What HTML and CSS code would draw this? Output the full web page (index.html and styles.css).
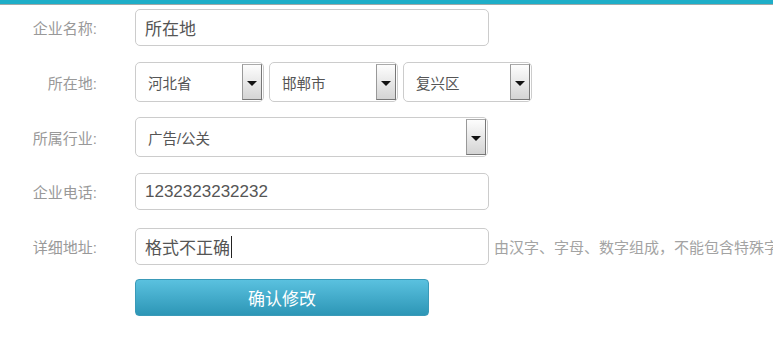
FILE: index.html
```html
<!DOCTYPE html>
<html lang="zh-CN">
<head>
    <meta charset="UTF-8">
    <meta name="viewport" content="width=device-width, initial-scale=1.0">
    <title>企业信息</title>
    <link rel="stylesheet" href="styles.css">
</head>
<body>
    <div class="top-bar"></div>

    <form class="info-form">
        <div class="form-row">
            <label class="form-label">企业名称:</label>
            <div class="text-input">所在地</div>
        </div>

        <div class="form-row row-region">
            <label class="form-label">所在地:</label>
            <div class="select-group">
                <div class="fake-select small">
                    <span class="select-text">河北省</span>
                    <span class="select-arrow"></span>
                </div>
                <div class="fake-select small">
                    <span class="select-text">邯郸市</span>
                    <span class="select-arrow"></span>
                </div>
                <div class="fake-select small">
                    <span class="select-text">复兴区</span>
                    <span class="select-arrow"></span>
                </div>
            </div>
        </div>

        <div class="form-row">
            <label class="form-label">所属行业:</label>
            <div class="fake-select wide">
                <span class="select-text">广告/公关</span>
                <span class="select-arrow"></span>
            </div>
        </div>

        <div class="form-row row-phone">
            <label class="form-label">企业电话:</label>
            <div class="text-input">1232323232232</div>
        </div>

        <div class="form-row row-address">
            <label class="form-label">详细地址:</label>
            <div class="text-input">格式不正确<span class="caret"></span></div>
            <span class="hint">由汉字、字母、数字组成，不能包含特殊字符</span>
        </div>

        <div class="form-row row-submit">
            <button type="button" class="submit-btn">确认修改</button>
        </div>
    </form>
</body>
</html>
```

FILE: styles.css
```css
html, body {
    overflow: hidden;
}

body {
    margin: 0;
    background: #fff;
    font-family: "Liberation Sans", "Noto Sans CJK SC", sans-serif;
    color: #555;
}

.top-bar {
    height: 4px;
    background: #1eaec8;
    border-bottom: 1px solid #9fa9a8;
}

.info-form {
    padding-top: 4px;
}

.form-row {
    display: flex;
    align-items: center;
    margin-bottom: 16px;
    white-space: nowrap;
}

.row-region {
    margin-bottom: 15px;
}

.row-phone {
    margin-bottom: 18px;
}

.row-address {
    margin-bottom: 14px;
}

.form-label {
    width: 97px;
    margin-right: 38px;
    flex-shrink: 0;
    text-align: right;
    font-size: 15px;
    color: #999;
}

.text-input {
    display: flex;
    align-items: center;
    box-sizing: border-box;
    width: 354px;
    height: 37px;
    padding-left: 9px;
    flex-shrink: 0;
    border: 1px solid #ccc;
    border-radius: 5px;
    font-size: 17px;
    color: #555;
}

.caret {
    display: inline-block;
    width: 1px;
    height: 22px;
    margin-left: 1px;
    background: #222;
}

.hint {
    margin-left: 5px;
    font-size: 15px;
    color: #a3a3a3;
}

.select-group {
    display: flex;
    gap: 5px;
}

.fake-select {
    display: flex;
    align-items: stretch;
    box-sizing: border-box;
    height: 40px;
    padding: 1px;
    flex-shrink: 0;
    border: 1px solid #ccc;
    border-radius: 5px;
    font-size: 14.5px;
    color: #555;
}

.fake-select.small {
    width: 129px;
}

.fake-select.wide {
    width: 353px;
}

.select-text {
    flex: 1;
    display: flex;
    align-items: center;
    padding-left: 11px;
}

.select-arrow {
    position: relative;
    box-sizing: border-box;
    width: 20px;
    border: 1px solid #777;
    border-top-color: #aaa;
    border-left-color: #999;
    background: linear-gradient(#fdfdfd, #d4d4d4);
}

.select-arrow::after {
    content: "";
    position: absolute;
    left: 4px;
    top: 16px;
    border-left: 5px solid transparent;
    border-right: 5px solid transparent;
    border-top: 5px solid #111;
}

.row-submit {
    padding-left: 135px;
}

.submit-btn {
    width: 294px;
    height: 37px;
    border: 1px solid #3a9ab8;
    border-radius: 4px;
    background: linear-gradient(#5ac1df, #2d96b6);
    color: #fff;
    font-family: "Noto Sans CJK SC", sans-serif;
    font-size: 17px;
    cursor: pointer;
}
```
